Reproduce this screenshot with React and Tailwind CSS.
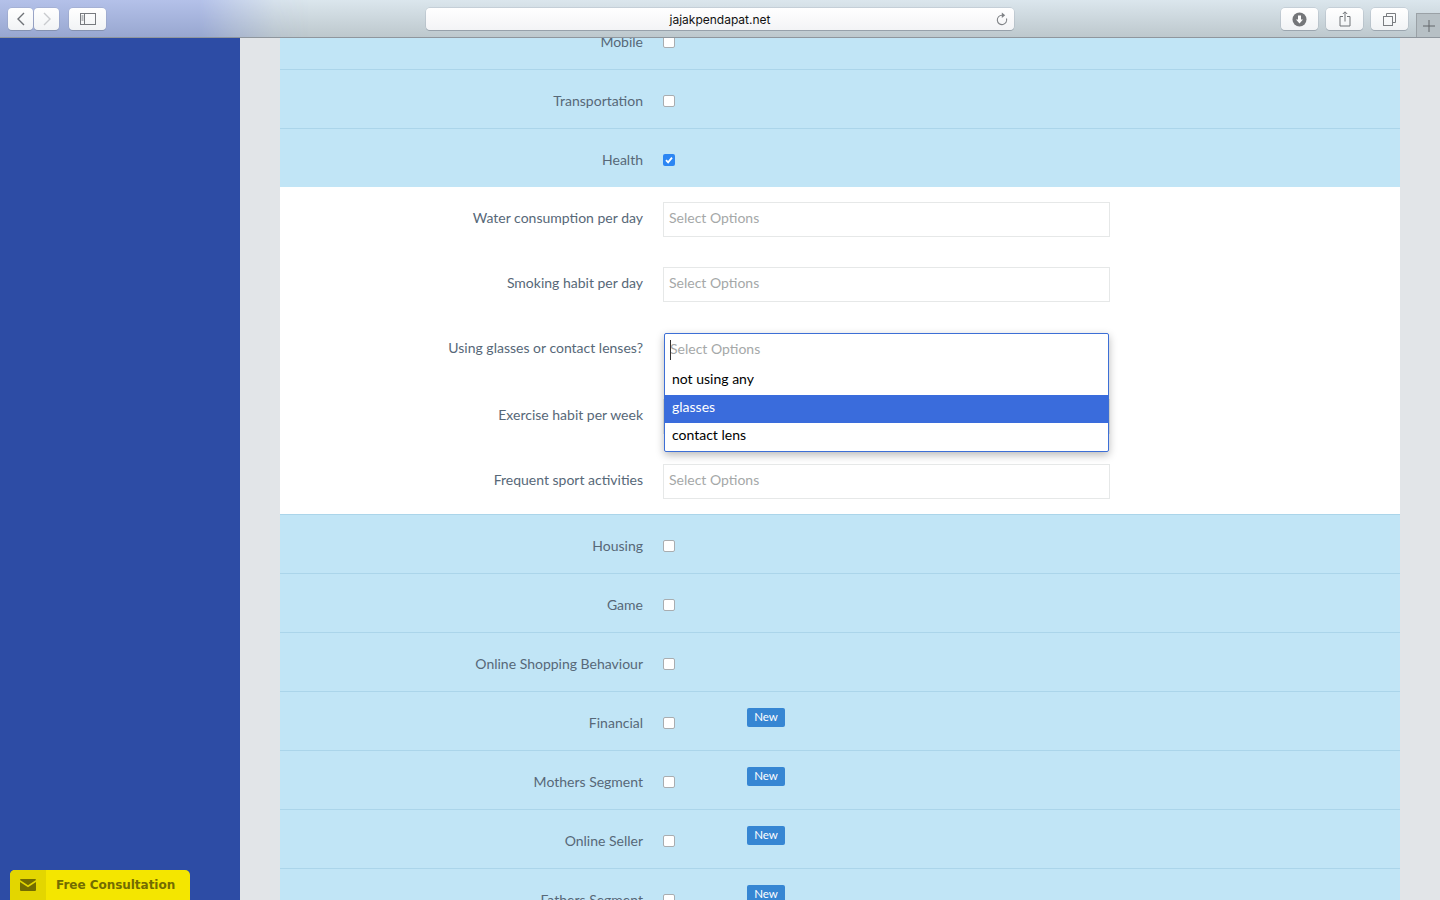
import React from "react";

const lato = "font-['Lato','Noto_Sans',sans-serif]";

function ToolButton({ className = "", children }) {
  return (
    <div className={`h-[22px] flex items-center justify-center rounded-[4px] bg-[linear-gradient(to_bottom,#ffffff,#f1f3f5)] shadow-[0_0_0_0.5px_rgba(120,130,145,0.35),0_1px_0_rgba(90,100,115,0.3)] ${className}`}>
      {children}
    </div>
  );
}

function Browser() {
  return (
    <header className="h-[38px] shrink-0 relative flex items-start border-b border-[#8f969d] bg-[linear-gradient(to_bottom,#dbe6ed,#bdc8cd)]">
      <div className="absolute inset-0 bg-[linear-gradient(to_bottom,#b4c1e9,#98a7d0)] [mask-image:linear-gradient(to_right,#000_200px,rgba(0,0,0,0.55)_235px,rgba(0,0,0,0.1)_275px,transparent_310px)]" />
      <div className="relative flex gap-px ml-2 mt-2">
        <ToolButton className="w-[25px]">
          <svg width="10" height="14" viewBox="0 0 10 14" fill="none" stroke="#6f7277" strokeWidth="1.4"><path d="M8 1 2 7l6 6" /></svg>
        </ToolButton>
        <ToolButton className="w-[25px]">
          <svg width="10" height="14" viewBox="0 0 10 14" fill="none" stroke="#c9cbce" strokeWidth="1.4"><path d="m2 1 6 6-6 6" /></svg>
        </ToolButton>
      </div>
      <ToolButton className="relative w-[37px] ml-[10px] mt-2">
        <svg width="16" height="12" viewBox="0 0 16 12" fill="none" stroke="#777a7f"><rect x="0.5" y="0.5" width="15" height="11" /><path d="M4.5 0.5v11M1.5 3h2M1.5 5h2M1.5 7h2" /></svg>
      </ToolButton>
      <div className="relative w-[588px] h-[22px] ml-[320px] mt-2 flex items-center justify-center rounded-[4px] bg-[linear-gradient(to_bottom,#ffffff,#f3f4f6)] shadow-[0_0_0_0.5px_rgba(120,130,145,0.35),0_1px_0_rgba(90,100,115,0.35)] font-['Inter',sans-serif] text-[12px] text-[#111] pt-px">
        jajakpendapat.net
        <svg className="absolute right-[6px] top-[4px]" width="12" height="14" viewBox="0 0 12 14" fill="none"><path d="M10.5 6.5A4.7 4.7 0 1 1 6 3.2" stroke="#7f8286" strokeWidth="1.1" /><path d="M5.8 0.4 9.2 3.2 5.8 6z" fill="#7f8286" /></svg>
      </div>
      <ToolButton className="relative w-[37px] ml-[267px] mt-2">
        <svg width="15" height="15" viewBox="0 0 15 15"><circle cx="7.5" cy="7.5" r="7" fill="#747679" /><path d="M6 3.5h3v4h2L7.5 11.5 4 7.5h2z" fill="#fff" /></svg>
      </ToolButton>
      <ToolButton className="relative w-[37px] ml-2 mt-2">
        <svg width="12" height="16" viewBox="0 0 12 16" fill="none" stroke="#6f7276"><path d="M4 5.5H1v9.5h10V5.5H8M6 10.5V1M3.8 3 6 .8 8.2 3" /></svg>
      </ToolButton>
      <ToolButton className="relative w-[37px] ml-2 mt-2">
        <svg width="13" height="13" viewBox="0 0 13 13" fill="none" stroke="#7a7d81"><rect x="0.5" y="3.5" width="9" height="9" /><path d="M3.5 3.5v-3h9v9h-3" /></svg>
      </ToolButton>
      <div className="relative w-6 h-6 ml-2 mt-[13px] flex items-center justify-center bg-[#b7c0c5] border-l border-t border-[#9aa1a6]">
        <svg width="12" height="12" viewBox="0 0 12 12" stroke="#62666a" strokeWidth="1"><path d="M6 0v12M0 6h12" /></svg>
      </div>
    </header>
  );
}

function Checkbox({ checked }) {
  return (
    <span className={`relative block w-3 h-3 mt-[25px] rounded-[2px] ${checked ? "bg-[#2c86f3]" : "bg-white border border-[#a9adb0]"}`}>
      <input type="checkbox" readOnly checked={!!checked} className="absolute inset-0 opacity-0" />
      {checked && (
        <svg className="absolute inset-0" width="12" height="12" viewBox="0 0 12 12" fill="none" stroke="#fff" strokeWidth="1.8"><path d="m3 6.2 2.1 2.1L9 3.6" /></svg>
      )}
    </span>
  );
}

function BlueRow({ label, checked, isNew, last }) {
  return (
    <div className={`flex shrink-0 ${last ? "h-[58px]" : "h-[59px] border-b border-[#abd5ea]"}`}>
      <div className="w-[363px] pt-[21px] text-right text-[14px] leading-[20px] text-[#576878]">{label}</div>
      <div className="w-[84px] ml-5 shrink-0"><Checkbox checked={checked} /></div>
      {isNew && (
        <span className="mt-4 w-[38px] h-[19px] pb-[2px] flex items-center justify-center rounded-[2px] bg-[#3686d3] text-white text-[11.5px]">New</span>
      )}
    </div>
  );
}

function SelectRow({ label, tall, children }) {
  return (
    <div className={`flex pt-[15px] ${tall ? "h-[67px]" : "h-[65px]"}`}>
      <div className="w-[363px] pt-[6px] text-right text-[14px] leading-[20px] text-[#576878]">{label}</div>
      <div className="relative ml-5 w-[447px]">{children}</div>
    </div>
  );
}

function ClosedSelect() {
  return (
    <div className="h-[35px] pl-[5px] pt-[5px] border border-[#e6e8e8] bg-white text-[14px] leading-[20px] text-[#a5a8a8]">Select Options</div>
  );
}

function OpenSelect() {
  return (
    <div className="absolute left-px top-px z-10 w-[445px] h-[119px] rounded-[2px] border border-[#3d6fd6] bg-white shadow-[0_3px_8px_rgba(0,0,0,0.28)] text-[14px] leading-[20px]">
      <div className="relative h-[33px] pl-[5px] pt-[5px] text-[#a5a8a8]">
        <span className="absolute left-[5px] top-[6px] w-px h-[20px] bg-[#333]" />
        Select Options
      </div>
      <div className="h-[28px] pl-[7px] pt-[2px] text-black">not using any</div>
      <div className="h-[28px] pl-[7px] pt-[2px] bg-[#3a6cdc] text-white">glasses</div>
      <div className="h-[28px] pl-[7px] pt-[2px] text-black">contact lens</div>
    </div>
  );
}

export default function App() {
  return (
    <div className={`w-[1440px] h-[900px] flex flex-col overflow-hidden ${lato}`}>
      <Browser />
      <div className="flex-1 flex min-h-0 overflow-hidden">
        <aside className="relative w-[240px] shrink-0 bg-[#2d4ca5]">
          <button className="absolute left-[10px] bottom-0 w-[180px] h-[30px] flex items-stretch rounded-t-[5px] overflow-hidden bg-[#f4e600] text-[#736c00] font-['DejaVu_Sans',sans-serif] text-[12px] font-bold">
            <span className="w-9 flex items-center justify-center bg-[#e3d600]">
              <svg width="16" height="12" viewBox="0 0 16 12" fill="#736c00"><path d="M1 0h14a1 1 0 0 1 1 1L8 6.2 0 1a1 1 0 0 1 1-1z" /><path d="M0 3l8 5.2L16 3v8a1 1 0 0 1-1 1H1a1 1 0 0 1-1-1z" /></svg>
            </span>
            <span className="pl-[10px] self-center tracking-[-0.03px]">Free Consultation</span>
          </button>
        </aside>
        <main className="flex-1 min-w-0 bg-[#e2e5e8] px-10">
          <div className="-mt-[27px]">
            <div className="bg-[#c1e5f6]">
              <BlueRow label="Mobile" />
              <BlueRow label="Transportation" />
              <BlueRow label="Health" checked last />
            </div>
            <div className="bg-white">
              <SelectRow label="Water consumption per day"><ClosedSelect /></SelectRow>
              <SelectRow label="Smoking habit per day"><ClosedSelect /></SelectRow>
              <SelectRow label="Using glasses or contact lenses?" tall><OpenSelect /></SelectRow>
              <SelectRow label="Exercise habit per week"><ClosedSelect /></SelectRow>
              <SelectRow label="Frequent sport activities"><ClosedSelect /></SelectRow>
            </div>
            <div className="bg-[#c1e5f6] border-t border-[#abd5ea]">
              <BlueRow label="Housing" />
              <BlueRow label="Game" />
              <BlueRow label="Online Shopping Behaviour" />
              <BlueRow label="Financial" isNew />
              <BlueRow label="Mothers Segment" isNew />
              <BlueRow label="Online Seller" isNew />
              <BlueRow label="Fathers Segment" isNew />
            </div>
          </div>
        </main>
      </div>
    </div>
  );
}
